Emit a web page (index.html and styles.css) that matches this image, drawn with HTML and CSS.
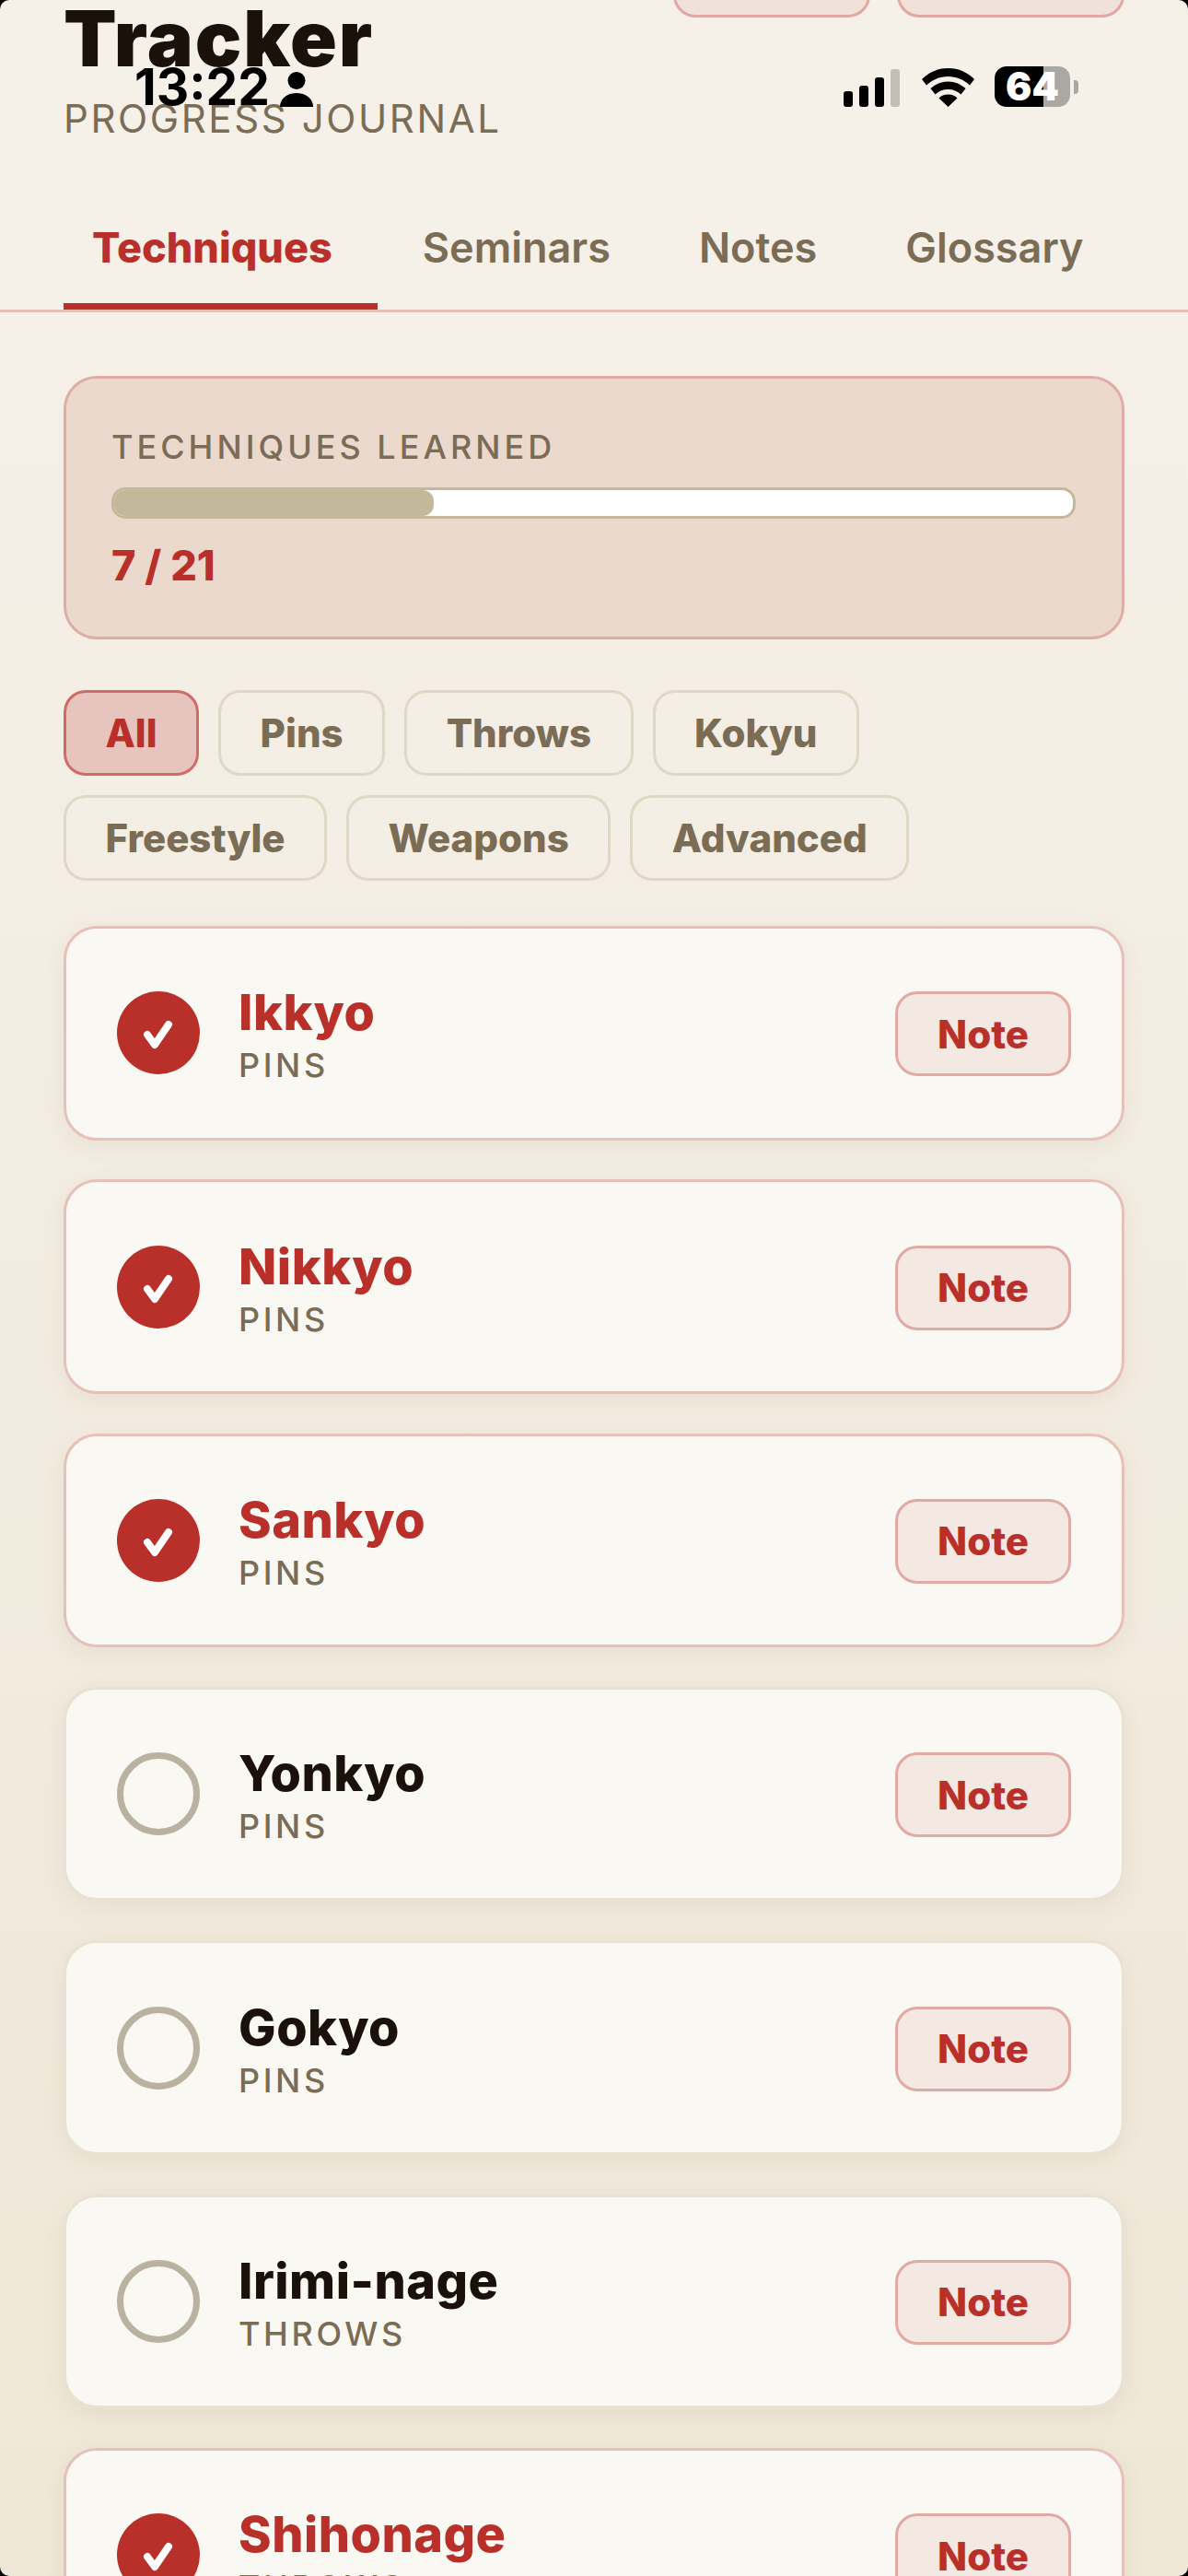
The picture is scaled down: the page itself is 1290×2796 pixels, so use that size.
FILE: index.html
```html
<!DOCTYPE html>
<html lang="en">
<head>
<meta charset="utf-8">
<title>Tracker</title>
<link rel="stylesheet" href="styles.css">
</head>
<body>
<div class="screen">
  <div class="status">
    <div class="status-left">
      <span class="clock">13:22</span>
      <svg class="person" viewBox="0 0 36 38"><circle cx="18" cy="9.5" r="9.5"/><path d="M0 38c0-1 0-3 1-5 2-6 9-10 17-10s15 4 17 10c1 2 1 4 1 5z"/></svg>
    </div>
    <div class="status-right">
      <div class="signal"><i class="b1"></i><i class="b2"></i><i class="b3"></i><i class="b4"></i></div>
      <svg class="wifi" viewBox="0 0 57 42"><path d="M28.500 0C17 0 7.500 4.500 0 12l5 6.500C11.500 12.500 19.500 9 28.500 9s17 3.500 23.500 9.500l5-6.500C49.500 4.500 40 0 28.500 0z"/><path d="M28.500 14.500c-7.500 0-14 3-19 7.500l5 6.500c3.500-3.500 8.500-5.500 14-5.500s10.500 2 14 5.500l5-6.500c-5-4.500-11.500-7.500-19-7.500z"/><path d="M28.500 28.500c-4 0-7.500 1.500-10 4L28.500 42l10-9.500c-2.500-2.500-6-4-10-4z"/></svg>
      <div class="battery"><div class="battery-body">64</div><div class="battery-tip"></div></div>
    </div>
  </div>

  <header class="header">
    <div>
      <h1 class="title">Tracker</h1>
      <p class="subtitle">PROGRESS JOURNAL</p>
    </div>
    <div class="top-actions">
      <span class="top-btn top-btn-a"></span>
      <span class="top-btn top-btn-b"></span>
    </div>
  </header>

  <nav class="tabs">
    <a class="tab active">Techniques</a>
    <a class="tab">Seminars</a>
    <a class="tab">Notes</a>
    <a class="tab">Glossary</a>
  </nav>

  <main class="content">
    <section class="stats">
      <div class="stats-label">TECHNIQUES LEARNED</div>
      <div class="track"><div class="fill" style="width:33.33%"></div></div>
      <div class="stats-value">7 / 21</div>
    </section>

    <div class="chips">
      <span class="chip active">All</span>
      <span class="chip">Pins</span>
      <span class="chip">Throws</span>
      <span class="chip">Kokyu</span>
      <span class="chip">Freestyle</span>
      <span class="chip">Weapons</span>
      <span class="chip">Advanced</span>
    </div>

    <div class="list">
      <article class="card done">
        <span class="check"><svg viewBox="0 0 90 90"><path d="M33 47l8 11 15-22"/></svg></span>
        <div class="info"><div class="name">Ikkyo</div><div class="cat">PINS</div></div>
        <button class="note">Note</button>
      </article>
      <article class="card done">
        <span class="check"><svg viewBox="0 0 90 90"><path d="M33 47l8 11 15-22"/></svg></span>
        <div class="info"><div class="name">Nikkyo</div><div class="cat">PINS</div></div>
        <button class="note">Note</button>
      </article>
      <article class="card done">
        <span class="check"><svg viewBox="0 0 90 90"><path d="M33 47l8 11 15-22"/></svg></span>
        <div class="info"><div class="name">Sankyo</div><div class="cat">PINS</div></div>
        <button class="note">Note</button>
      </article>
      <article class="card">
        <span class="check"></span>
        <div class="info"><div class="name">Yonkyo</div><div class="cat">PINS</div></div>
        <button class="note">Note</button>
      </article>
      <article class="card">
        <span class="check"></span>
        <div class="info"><div class="name">Gokyo</div><div class="cat">PINS</div></div>
        <button class="note">Note</button>
      </article>
      <article class="card">
        <span class="check"></span>
        <div class="info"><div class="name">Irimi-nage</div><div class="cat">THROWS</div></div>
        <button class="note">Note</button>
      </article>
      <article class="card done">
        <span class="check"><svg viewBox="0 0 90 90"><path d="M33 47l8 11 15-22"/></svg></span>
        <div class="info"><div class="name">Shihonage</div><div class="cat">THROWS</div></div>
        <button class="note">Note</button>
      </article>
    </div>
  </main>
</div>
</body>
</html>
```

FILE: styles.css
```css
* { box-sizing: border-box; }
html, body { margin: 0; padding: 0; background: #000; }
body { font-family: Inter, "Noto Sans", sans-serif; }

.screen {
  position: relative;
  width: 1290px;
  height: 2796px;
  overflow: hidden;
  border-radius: 10px;
  background: linear-gradient(180deg, #f5f0e8 0%, #f5f0e8 12%, #efe7d7 100%);
}

/* status bar overlay */
.status { position: absolute; top: 72px; left: 0; right: 0; height: 44px; z-index: 5; }
.status-left { position: absolute; left: 146px; top: 0; display: flex; align-items: center; gap: 11px; height: 44px; }
.clock { font-size: 55px; font-weight: 700; line-height: 44px; color: #000; }
.person { width: 36px; height: 38px; fill: #000; margin-top: 5px; }
.status-right { position: absolute; left: 916px; top: 0; display: flex; align-items: flex-end; height: 44px; }
.signal { display: flex; align-items: flex-end; gap: 7px; width: 63px; height: 43px; }
.signal i { display: block; width: 10px; border-radius: 3px; background: #000; }
.signal .b1 { height: 17px; }
.signal .b2 { height: 23px; }
.signal .b3 { height: 32px; }
.signal .b4 { height: 41px; background: #c2bfb7; }
.wifi { width: 57px; height: 42px; fill: #000; margin-left: 22px; }
.battery { display: flex; align-items: center; margin-left: 22px; height: 44px; }
.battery-body {
  width: 82px; height: 44px; border-radius: 13px;
  background: linear-gradient(90deg, #000 64.5%, #aaa8a2 64.5%);
  color: #fff; font-size: 42px; font-weight: 900; line-height: 44px; text-align: center;
}
.battery-tip { width: 5px; height: 15px; margin-left: 4px; border-radius: 0 4px 4px 0; background: #aaa8a2; }

/* header */
.header { display: flex; justify-content: space-between; align-items: flex-start; padding: 2px 69px 0 69px; }
.title { margin: 0; height: 80px; font-size: 84px; line-height: 80px; font-weight: 900; letter-spacing: 1.800px; color: #1a110a; }
.subtitle { margin: 21px 0 0; font-size: 42px; font-weight: 400; letter-spacing: 2.600px; color: #7a6c55; }
.top-actions { display: flex; gap: 29px; margin-top: -75px; }
.top-btn { display: block; height: 92px; border: 3px solid #e0a9a4; border-radius: 24px; background: #f0e1db; }
.top-btn-a { width: 214px; }
.top-btn-b { width: 247px; }

/* tabs */
.tabs { display: flex; gap: 14px; margin-top: 87px; padding-left: 69px; border-bottom: 3px solid #e8bfb8; }
.tab { padding: 0 49px 33px 33px; font-size: 45px; font-weight: 600; color: #7a6c55; border-bottom: 7px solid transparent; }
.tab.active { margin-right: 2px; padding-left: 31px; font-weight: 800; color: #b9302a; border-bottom-color: #b9302a; }

/* content */
.content { padding: 69px 69px 0; }
.stats { height: 286px; padding: 52px 49px 0; border: 3px solid #e0aca6; border-radius: 36px; background: #ecd9ce; }
.stats-label { font-size: 36px; font-weight: 500; letter-spacing: 4px; line-height: 44px; color: #7a6c55; }
.track { height: 34px; margin-top: 22px; margin-right: 1px; border: 3px solid #c4b89b; border-radius: 15px; background: #fff; }
.fill { height: 100%; border-radius: 12px; background: #c4b89b; }
.stats-value { margin-top: 23px; font-size: 45px; font-weight: 800; color: #b9302a; }

.chips { display: flex; flex-wrap: wrap; gap: 21px 21px; margin-top: 55px; }
.chip {
  display: flex; align-items: center; height: 93px; padding: 0 42.500px;
  border: 3px solid #e0d8c4; border-radius: 24px;
  font-size: 42px; font-weight: 800; color: #7a6c55;
}
.chip.active { background: #e7c5be; border-color: #d06c66; color: #b9302a; }

.list { display: flex; flex-direction: column; gap: 42.830px; margin-top: 49px; }
.card {
  display: flex; align-items: center; gap: 42px; height: 232.500px; padding: 0 55px;
  border: 3px solid #e8e2d4; border-radius: 36px; background: #faf8f3;
  box-shadow: 0 6px 24px rgba(110, 85, 40, .08);
}
.card.done { border-color: #e8c0ba; }
.check { flex: none; width: 90px; height: 90px; border: 7px solid #bab2a0; border-radius: 50%; }
.done .check { border: 0; background: #b9302a; }
.check svg { display: block; width: 90px; height: 90px; fill: none; stroke: #fff; stroke-width: 8; stroke-linecap: round; stroke-linejoin: round; }
.info { flex: 1; margin-top: 2px; }
.name { font-size: 54px; font-weight: 800; letter-spacing: .5px; color: #1a110a; }
.done .name { color: #b9302a; }
.cat { margin-top: 3px; font-size: 36px; font-weight: 500; letter-spacing: 3.600px; color: #7a6c55; }
.note {
  width: 191px; height: 92px; margin-top: 2px; padding: 0; border: 3px solid #e2aaa5; border-radius: 24px;
  background: #f4e8e3; font-family: inherit; font-size: 42px; font-weight: 800; color: #b9302a;
}
```
